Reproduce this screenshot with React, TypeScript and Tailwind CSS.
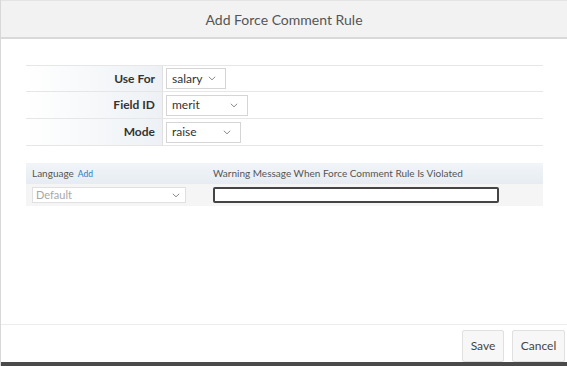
import React from "react";

function Chevron() {
  return (
    <svg width="8" height="5" viewBox="0 0 8 5" className="shrink-0">
      <path d="M0.8 0.8 L4 3.8 L7.2 0.8" fill="none" stroke="#8a8a8a" strokeWidth="1" />
    </svg>
  );
}

function Select({ value, width }: { value: string; width: string }) {
  return (
    <div className={`flex items-center justify-between h-[21px] border border-[#d5d5d5] bg-white pl-[5px] pr-[9px] ${width}`}>
      <span className="text-[12px] text-[#333]">{value}</span>
      <Chevron />
    </div>
  );
}

function Row({ label, value, width, first }: { label: string; value: string; width: string; first?: boolean }) {
  return (
    <div className={`flex h-[27px] border-b border-[#e6e6e6] ${first ? "border-t" : ""}`}>
      <div className="w-[137px] flex items-center justify-end pr-[7px] bg-gradient-to-r from-white to-[#edf1f5] border-r border-[#e0e0e0]">
        <span className="text-[12px] font-bold text-[#333]">{label}</span>
      </div>
      <div className="flex items-center pl-[3px]">
        <Select value={value} width={width} />
      </div>
    </div>
  );
}

export default function App() {
  return (
    <div className="w-[567px] h-[366px] flex flex-col bg-white border-l border-[#d8d8d8] font-['Lato',sans-serif] overflow-hidden">
      <div className="h-[39px] shrink-0 bg-[#f2f2f2] border-t border-[#e4e4e4] border-b-2 border-b-[#d9d9d9] flex items-center justify-center">
        <span className="text-[14px] text-[#555]">Add Force Comment Rule</span>
      </div>
      <div className="flex-1 flex flex-col px-[25px] pt-[26px]">
        <div className="w-[517px]">
          <Row label="Use For" value="salary" width="w-[60px]" first />
          <Row label="Field ID" value="merit" width="w-[82px]" />
          <Row label="Mode" value="raise" width="w-[75px]" />
        </div>
        <div className="w-[517px] mt-[17px]">
          <div className="h-[21px] flex items-center bg-gradient-to-b from-[#f1f5f9] to-[#e6ecf2] text-[10px] text-[#555]">
            <div className="w-[187px] pl-[6px] flex items-baseline gap-[4px]">
              <span>Language</span>
              <span className="text-[8.5px] text-[#2a7ac0]">Add</span>
            </div>
            <div>Warning Message When Force Comment Rule Is Violated</div>
          </div>
          <div className="h-[22px] flex items-center bg-[#f5f5f5]">
            <div className="w-[187px] pl-[6px]">
              <div className="w-[154px] h-[16px] border border-[#e0e0e0] bg-white flex items-center justify-between pl-[3px] pr-[5px]">
                <span className="text-[11px] text-[#a8a8a8]">Default</span>
                <Chevron />
              </div>
            </div>
            <div className="w-[286px] h-[16px] border-2 border-[#444] rounded-[2px] bg-white" />
          </div>
        </div>
      </div>
      <div className="h-[38px] shrink-0 border-t border-[#ececec] flex items-start justify-end gap-[8px] pr-[2px] pt-[5px]">
        <button className="h-[32px] w-[42px] border border-[#e0e0e0] bg-[#f7f7f7] text-[12px] text-[#444] rounded-[2px]">Save</button>
        <button className="h-[32px] w-[53px] border border-[#e0e0e0] bg-[#f7f7f7] text-[12px] text-[#444] rounded-[2px]">Cancel</button>
      </div>
      <div className="h-[4px] shrink-0 bg-[#4a4a4a]" />
    </div>
  );
}
